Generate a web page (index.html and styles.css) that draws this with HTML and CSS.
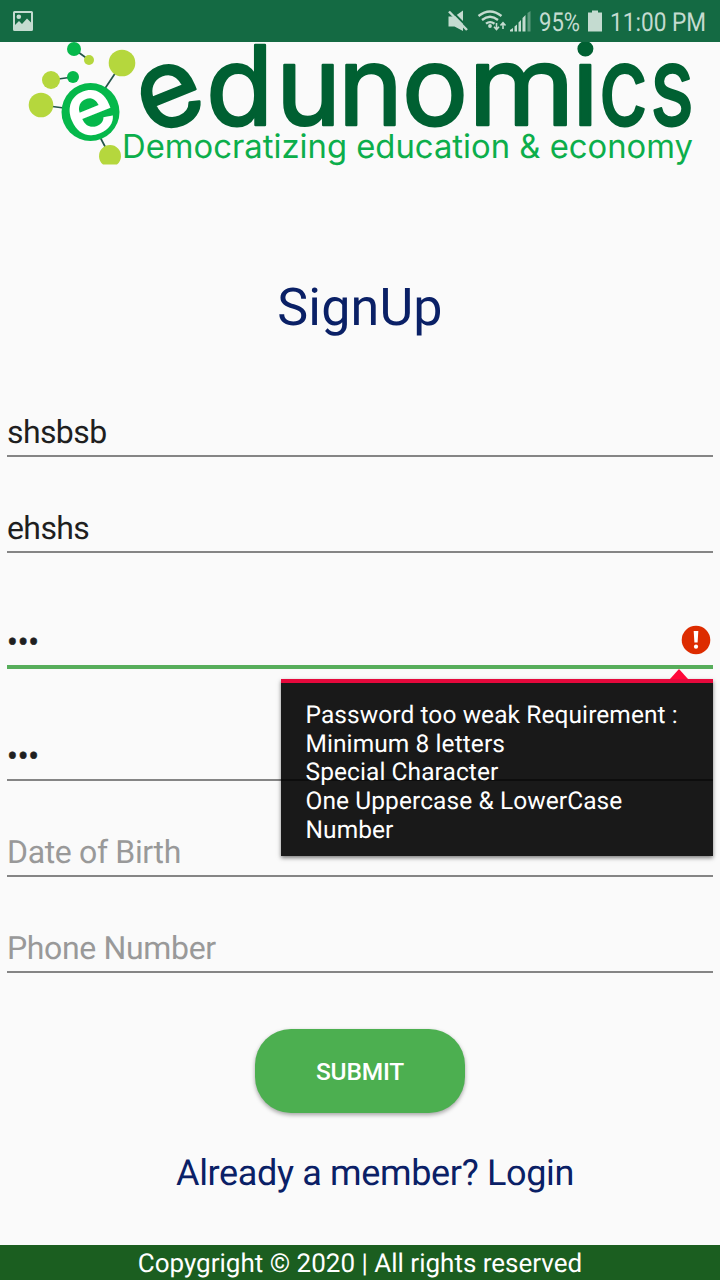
FILE: index.html
```html
<!DOCTYPE html>
<html lang="en">
<head>
<meta charset="utf-8">
<title>SignUp</title>
<link rel="stylesheet" href="styles.css">
</head>
<body>
<header class="status">
  <svg class="gallery" viewBox="0 0 22 22" width="22" height="22">
    <path fill-rule="evenodd" d="M2.500 1H19.500Q21 1 21 2.500V19.500Q21 21 19.500 21H2.500Q1 21 1 19.500V2.500Q1 1 2.500 1ZM3 3V15L7 11L10 14L15 8.500L19 12.500V3Z"/>
    <circle cx="6.800" cy="6.800" r="2.300"/>
  </svg>
  <svg class="indicators" viewBox="440 0 280 42" width="280" height="42">
    <path d="M448.500 16.500H454.500L463 10.500V31L454.500 26.500H448.500Z"/>
    <path class="slash" d="M450.500 10L469 28.500"/>
    <path class="line" d="M449 11.500L467 30"/>
    <g class="wifi">
      <path d="M478.500 16Q490 7 501.500 16"/>
      <path d="M482 20Q490 13.500 498 20"/>
      <path d="M486 23.700Q490 20.500 494.500 23.700"/>
    </g>
    <circle cx="490" cy="26" r="1.900"/>
    <path class="arrow" d="M496.500 23V29M494 26.700L496.500 29.500L499 26.700M503 29V23M500.500 25.500L503 22.700L505.500 25.500"/>
    <path d="M510 31.500V30L513 28V31.500ZM514.500 31.500V26.500L517 24.500V31.500ZM518.500 31.500V22.500L521 20V31.500ZM522.500 31.500V18L525.500 15V31.500Z"/>
    <path class="faint" d="M527.500 31.500V13L530.500 11V31.500Z"/>
    <text x="539" y="31" textLength="41" lengthAdjust="spacingAndGlyphs">95%</text>
    <path d="M592 10.500H598V12.500H602V31.500H588V12.500H592Z"/>
    <text x="610" y="31" textLength="96" lengthAdjust="spacingAndGlyphs">11:00 PM</text>
  </svg>
</header>

<main class="page">
  <svg class="logo" viewBox="0 42 720 126" width="720" height="126">
    <path class="links" d="M74 49L89 60M51 80L73 77M41 105L64 108M122 63L104 90M100 137L110 156"/>
    <g class="lime">
      <circle cx="89" cy="60" r="5"/><circle cx="51" cy="80" r="9"/>
      <circle cx="41" cy="105" r="12.300"/><circle cx="122" cy="63" r="13.300"/>
      <path d="M103 164.500A11 11 0 1 1 117 164.500Z"/>
    </g>
    <g class="green"><circle cx="74" cy="49" r="7"/><circle cx="73" cy="77" r="6"/><circle cx="90.500" cy="112" r="29"/></g>
    <text class="mark" transform="translate(90.500 112) rotate(-22)" x="-24" y="22.500">e</text>
    <text class="word" y="136 125" x="151 206 276 338 402"><tspan rotate="-22">e</tspan>duno<tspan x="468" textLength="107" lengthAdjust="spacingAndGlyphs">m</tspan><tspan x="572">i</tspan><tspan x="599" textLength="49" lengthAdjust="spacingAndGlyphs">c</tspan><tspan x="650" textLength="44" lengthAdjust="spacingAndGlyphs">s</tspan></text>
    <text class="tag" x="122" y="158" textLength="571" lengthAdjust="spacingAndGlyphs">Democratizing education &amp; economy</text>
  </svg>

  <h1 class="title">SignUp</h1>

  <form class="form">
    <div class="field first">shsbsb</div>
    <div class="field">ehshs</div>
    <div class="field tall active">
      <span class="dots">•••</span>
      <svg class="error" viewBox="0 0 30 30" width="30" height="30">
        <circle cx="15" cy="15" r="14.300"/>
        <path d="M12.700 6H17.300L16.600 17.500H13.400Z"/><circle class="point" cx="15" cy="21.700" r="2.100"/>
      </svg>
      <div class="tooltip">Password too weak Requirement :<br>Minimum 8 letters<br>Special Character<br>One Uppercase &amp; LowerCase<br>Number</div>
    </div>
    <div class="field tall second"><span class="dots">•••</span></div>
    <div class="field hint">Date of Birth</div>
    <div class="field hint">Phone Number</div>
    <button class="submit" type="button">SUBMIT</button>
  </form>
  <a class="login">Already a member? Login</a>
</main>
<footer class="footer"><span>Copygright © 2020 | All rights reserved</span></footer>
</body>
</html>
```

FILE: styles.css
```css
* { box-sizing: border-box; }
body {
  margin: 0;
  width: 720px;
  height: 1280px;
  display: flex;
  flex-direction: column;
  overflow: hidden;
  background: #fafafa;
  font-family: Roboto, sans-serif;
  text-rendering: geometricPrecision;
  color: #1f1f1f;
}
.status {
  height: 42px;
  background: #146a43;
  display: flex;
  justify-content: space-between;
  padding-left: 12px;
  fill: #c4dbd0;
}
.gallery { margin-top: 10px; }
.indicators text { font-size: 26px; }
.slash { stroke: #146a43; stroke-width: 2; }
.line { stroke: #c4dbd0; stroke-width: 2.5; }
.wifi { fill: none; stroke: #c4dbd0; stroke-width: 2.3; }
.arrow { fill: none; stroke: #c4dbd0; stroke-width: 1.6; }
.faint { fill: #5c9a7d; }

.page {
  flex: 1;
  display: flex;
  flex-direction: column;
}
.logo { display: block; }
.links { stroke: #24554a; stroke-width: 1.7; }
.lime { fill: #b5d73d; }
.green { fill: #05b84b; }
.mark {
  font: 600 80px Inter, sans-serif;
  fill: #fff;
}
.word {
  font: 400 110px Inter, sans-serif;
  fill: #006032;
  stroke: #006032;
  stroke-width: 2.5;
  stroke-linejoin: round;
}
.tag {
  font: 400 33px Inter, sans-serif;
  fill: #0cae4b;
}
.title {
  margin: 109px 0 0;
  height: 62px;
  line-height: 62px;
  text-align: center;
  font-size: 52px;
  letter-spacing: .2px;
  font-weight: 400;
  color: #0a2066;
}
.form {
  display: flex;
  flex-direction: column;
  padding: 0 7px;
}
.field {
  position: relative;
  height: 96px;
  padding-top: 52px;
  border-bottom: 2px solid #858585;
  font-size: 32px;
  letter-spacing: -.6px;
  line-height: 38px;
}
.first { height: 118px; padding-top: 74px; }
.tall { height: 116px; padding-top: 70px; }
.second { height: 112px; padding-top: 68px; }
.active { border-bottom: 4px solid #57ae5b; }
.hint { color: #999; letter-spacing: -.35px; }
.dots { display: block; letter-spacing: -.15px; -webkit-text-stroke: .5px #1f1f1f; }
.error { position: absolute; right: 2px; top: 72px; fill: #dd2c00; }
.error path, .point { fill: #fff; }
.tooltip {
  position: absolute;
  z-index: 1;
  top: 126px;
  right: 0;
  width: 432px;
  height: 177px;
  padding: 18px 0 0 24.5px;
  border-top: 4px solid #e6093c;
  background: rgba(0, 0, 0, .9);
  box-shadow: 0 2px 4px rgba(0, 0, 0, .5);
  color: #fff;
  font-size: 24.5px;
  letter-spacing: .08px;
  line-height: 28.7px;
  white-space: nowrap;
}
.tooltip::before {
  content: "";
  position: absolute;
  top: -14px;
  right: 25px;
  border: solid transparent;
  border-width: 0 9px 10px;
  border-bottom-color: #ff0739;
}
.submit {
  align-self: center;
  margin-top: 56px;
  width: 210px;
  height: 84px;
  border: 0;
  border-radius: 36px;
  background: #4caf50;
  box-shadow: 0 2px 4px rgba(0, 0, 0, .35);
  color: #fff;
  font: 500 24.5px Roboto, sans-serif;
  letter-spacing: -.2px;
}
.login {
  margin: 39px 0 0 176px;
  font-size: 36px;
  letter-spacing: -.35px;
  line-height: 42px;
  color: #0a2066;
}
.footer {
  height: 35px;
  padding-top: 4px;
  background: #1b5e20;
  color: #fff;
  text-align: center;
  font-size: 26px;
  line-height: 31px;
}
```
